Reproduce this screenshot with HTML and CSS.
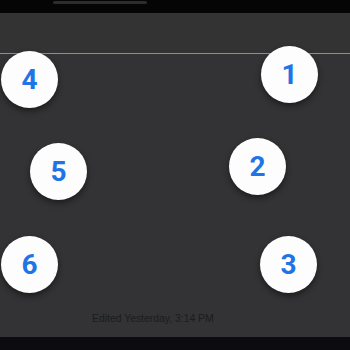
FILE: index.html
```html
<!DOCTYPE html>
<html>
<head>
<meta charset="utf-8">
<link rel="stylesheet" href="styles.css">
</head>
<body>
<div class="statusbar"><div class="pill"></div></div>
<div class="main">
  <div class="toolbar"></div>
  <div class="rule"></div>
  <div class="canvas">
    <div class="node n1">1</div>
    <div class="node n2">2</div>
    <div class="node n3">3</div>
    <div class="node n4">4</div>
    <div class="node n5">5</div>
    <div class="node n6">6</div>
  </div>
  <div class="footer">Edited Yesterday, 3:14 PM</div>
</div>
<div class="bottombar"></div>
</body>
</html>
```
FILE: styles.css
```css
html, body { margin: 0; padding: 0; }
body {
  width: 350px; height: 350px; overflow: hidden;
  background: #0c0b0f;
  font-family: "Liberation Sans", Arial, sans-serif;
  display: flex; flex-direction: column;
}
.statusbar { height: 13px; background: #050505; padding-left: 53px; box-sizing: border-box; padding-top: 1px; }
.pill { width: 94px; height: 3px; border-radius: 2px; background: #2c2c2c; }
.main { position: relative; height: 324px; background: #333234; display: flex; flex-direction: column; }
.toolbar { height: 40px; background: #343334; }
.rule { height: 1px; background: #8e8e8e; }
.canvas { flex: 1; }
.footer {
  height: 31px; font-size: 10.4px; color: #1c1c1e;
  padding-left: 92px; line-height: 1; box-sizing: border-box; padding-top: 8px;
}
.bottombar { flex: 1; background: #0c0b0f; }
.node {
  position: absolute; width: 57px; height: 57px; border-radius: 50%;
  background: #fdfdfd; color: #1f74e6;
  font-family: Roboto, "Liberation Sans", sans-serif; font-weight: 700; font-size: 28px;
  display: flex; align-items: center; justify-content: center;
  box-shadow: 0 3px 6px rgba(0,0,0,0.45);
}
.n1 { left: 261px; top: 33px; }
.n2 { left: 229px; top: 125px; }
.n3 { left: 260px; top: 223px; }
.n4 { left: 1px; top: 38px; }
.n5 { left: 30px; top: 130px; }
.n6 { left: 1px; top: 223px; }
```
